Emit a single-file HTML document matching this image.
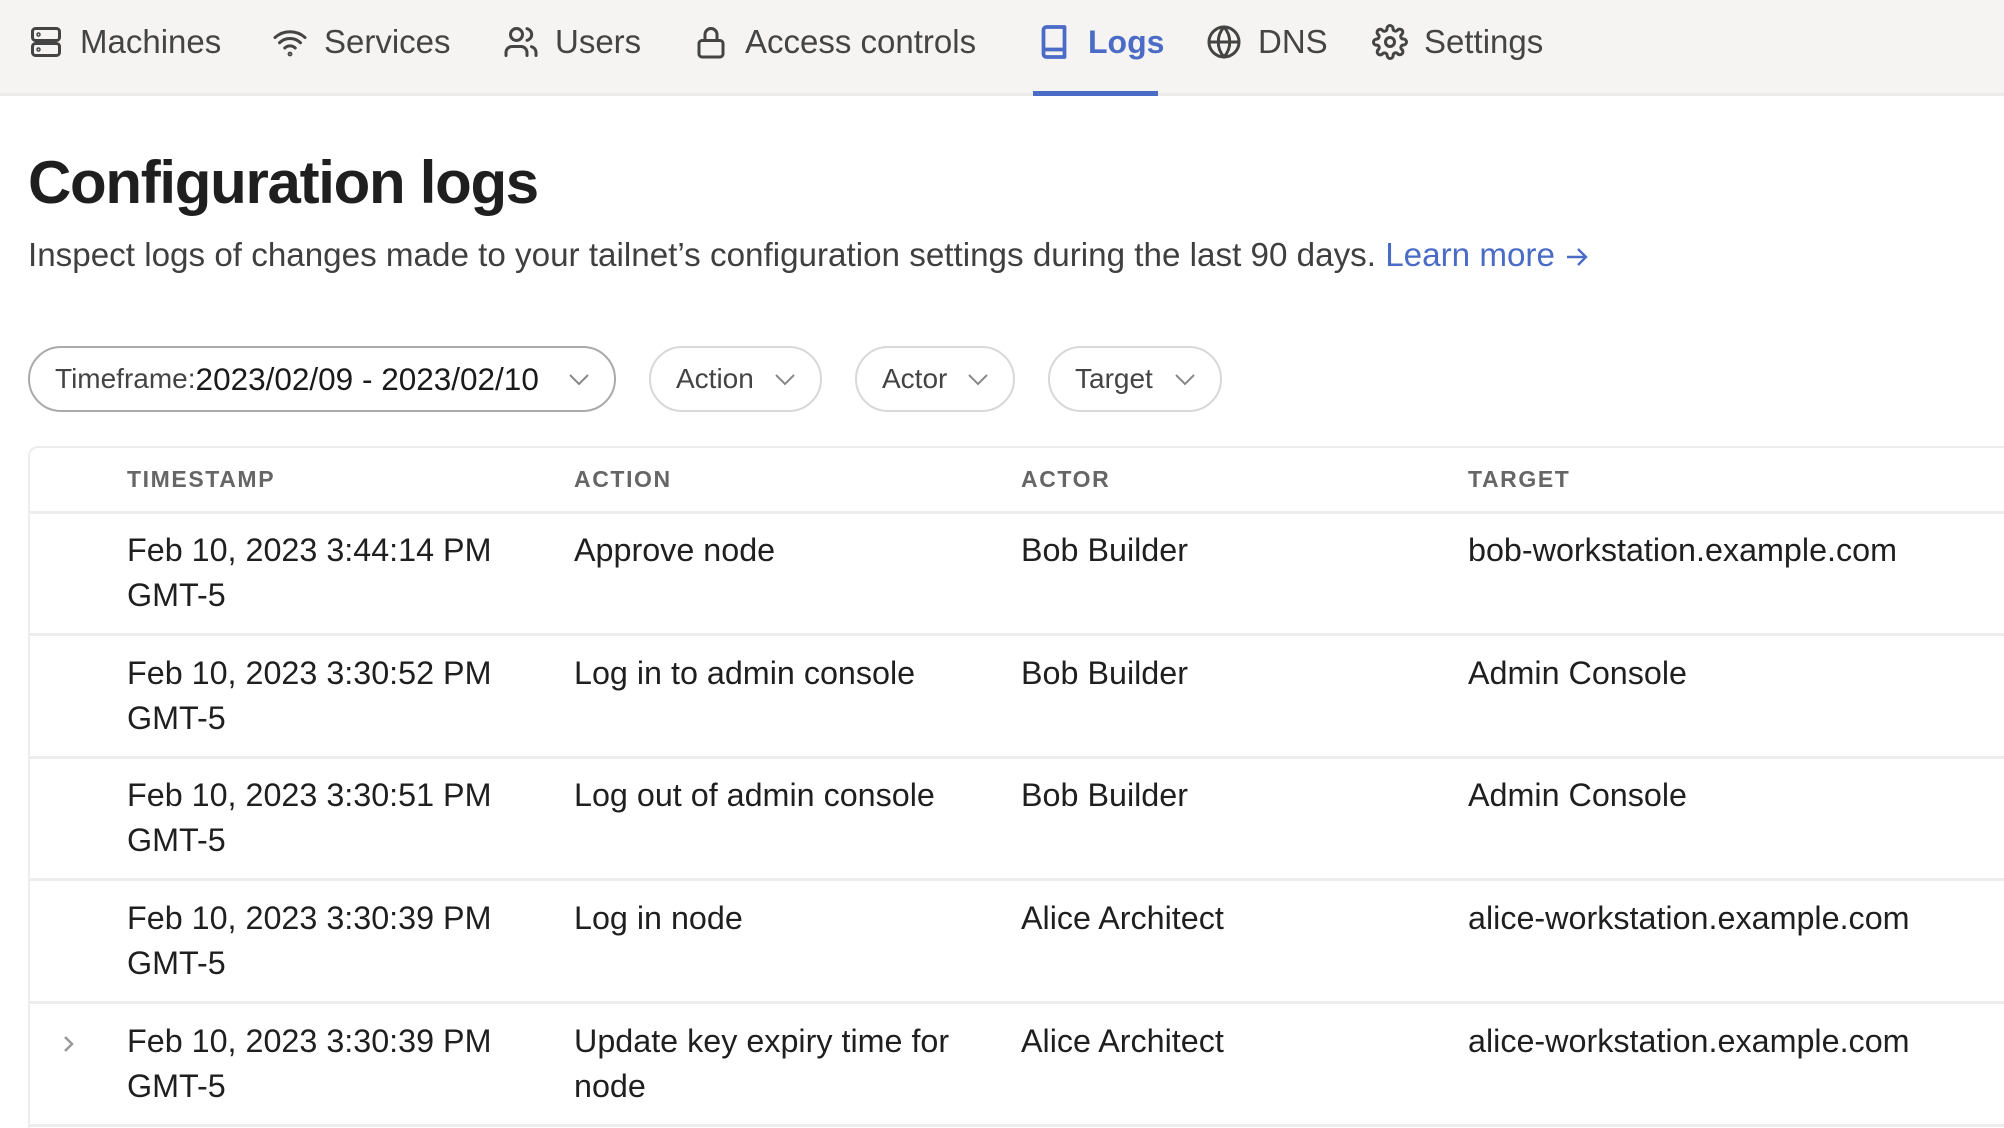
<!DOCTYPE html>
<html style="height:1128px;overflow:hidden"><head><meta charset="utf-8"><style>
*{margin:0;padding:0;box-sizing:border-box}
body{width:2004px;height:1128px;overflow:hidden;background:#fff;font-family:"Liberation Sans",sans-serif;color:#1f1f1f;position:relative}
.nav{position:absolute;left:0;top:0;width:2004px;height:96px;background:#f5f4f2;border-bottom:3px solid #ebebea}
.ni{position:absolute;top:20px;height:44px;display:flex;align-items:center;font-size:33px;color:#444}
.ni svg{width:36px;height:36px;margin-right:16px;fill:none;stroke:#444;stroke-width:2;stroke-linecap:round;stroke-linejoin:round}
.ni.act{color:#4a6bc6;font-weight:bold;font-size:32px}
.ni.act svg{stroke:#4a6bc6}
.ul{position:absolute;left:1033px;top:91px;width:125px;height:5px;background:#4a6bc6}
h1{position:absolute;left:28px;top:148px;font-size:60px;font-weight:bold;letter-spacing:-1.3px;color:#1f1f1f}
.sub{position:absolute;left:28px;top:237px;font-size:33.2px;color:#3f3f3f;white-space:nowrap}
.sub a{color:#4a6bc6;text-decoration:none}
.f{position:absolute;top:346px;height:66px;border:2px solid #d8d8d8;border-radius:33px;font-size:28px;color:#444;display:flex;align-items:center;padding-left:25px}
.f svg{position:absolute;right:24px;top:23px;width:22px;height:16px;fill:none;stroke:#888;stroke-width:2}
.f b{font-weight:normal;color:#1a1a1a;font-size:31.5px}
.tbl{position:absolute;left:28px;top:446px;width:2000px;height:720px;border:2px solid #ededed;border-radius:10px;border-right:none}
.th{position:absolute;top:466px;font-size:23px;font-weight:bold;letter-spacing:1.6px;color:#666}
.hl{position:absolute;left:30px;width:1974px;height:3px;background:#ededed}
.c{position:absolute;font-size:32.3px;line-height:45px;color:#1f1f1f;white-space:nowrap}
</style></head><body>
<div class="nav">
<div class="ni" style="left:28px"><svg viewBox="0 0 24 24"><rect x="3" y="3" width="18" height="8" rx="2"/><rect x="3" y="13" width="18" height="8" rx="2"/><circle cx="7" cy="7" r=".5"/><circle cx="7" cy="17" r=".5"/></svg>Machines</div>
<div class="ni" style="left:272px"><svg viewBox="0 0 24 24"><path d="M2 9a15 15 0 0 1 20 0M5 12.5a10 10 0 0 1 14 0M8.5 16a5 5 0 0 1 7 0"/><circle cx="12" cy="20" r=".6"/></svg>Services</div>
<div class="ni" style="left:503px"><svg viewBox="0 0 24 24"><circle cx="9" cy="7" r="4"/><path d="M2 21v-2a4 4 0 0 1 4-4h6a4 4 0 0 1 4 4v2M16 3.1a4 4 0 0 1 0 7.8M22 21v-2a4 4 0 0 0-3-3.9"/></svg>Users</div>
<div class="ni" style="left:693px"><svg viewBox="0 0 24 24"><rect x="4" y="11" width="16" height="11" rx="2"/><path d="M8 11V7a4 4 0 0 1 8 0v4"/></svg>Access controls</div>
<div class="ni act" style="left:1036px"><svg viewBox="0 0 24 24" style="stroke-width:2.5"><path d="M5 4a2 2 0 0 1 2-2h12v20H7a2 2 0 0 1-2-2zM5 17h14"/></svg>Logs</div>
<div class="ni" style="left:1206px"><svg viewBox="0 0 24 24"><circle cx="12" cy="12" r="10"/><path d="M2 12h20M12 2a15 15 0 0 1 0 20a15 15 0 0 1 0-20"/></svg>DNS</div>
<div class="ni" style="left:1372px"><svg viewBox="0 0 24 24"><circle cx="12" cy="12" r="3"/><path d="M19.4 15a1.7 1.7 0 0 0 .3 1.8l.1.1a2 2 0 1 1-2.8 2.8l-.1-.1a1.7 1.7 0 0 0-1.8-.3 1.7 1.7 0 0 0-1 1.5V21a2 2 0 1 1-4 0v-.1a1.7 1.7 0 0 0-1.1-1.5 1.7 1.7 0 0 0-1.8.3l-.1.1a2 2 0 1 1-2.8-2.8l.1-.1a1.7 1.7 0 0 0 .3-1.8 1.7 1.7 0 0 0-1.5-1H3a2 2 0 1 1 0-4h.1a1.7 1.7 0 0 0 1.5-1.1 1.7 1.7 0 0 0-.3-1.8l-.1-.1a2 2 0 1 1 2.8-2.8l.1.1a1.7 1.7 0 0 0 1.8.3H9a1.7 1.7 0 0 0 1-1.5V3a2 2 0 1 1 4 0v.1a1.7 1.7 0 0 0 1 1.5 1.7 1.7 0 0 0 1.8-.3l.1-.1a2 2 0 1 1 2.8 2.8l-.1.1a1.7 1.7 0 0 0-.3 1.8V9a1.7 1.7 0 0 0 1.5 1H21a2 2 0 1 1 0 4h-.1a1.7 1.7 0 0 0-1.5 1z"/></svg>Settings</div>
<div class="ul"></div>
</div>
<h1>Configuration logs</h1>
<div class="sub">Inspect logs of changes made to your tailnet’s configuration settings during the last 90 days. <a>Learn more <svg width="26" height="22" viewBox="0 0 26 22" style="vertical-align:-2px"><path d="M3 11h19M14 3l8 8-8 8" fill="none" stroke="#4a6bc6" stroke-width="2.4"/></svg></a></div>
<div class="f" style="left:28px;width:588px;border-color:#aaa">Timeframe:<b>2023/02/09 - 2023/02/10</b><svg viewBox="0 0 22 16"><path d="M2 4l9 9 9-9"/></svg></div>
<div class="f" style="left:649px;width:173px">Action<svg viewBox="0 0 22 16"><path d="M2 4l9 9 9-9"/></svg></div>
<div class="f" style="left:855px;width:160px">Actor<svg viewBox="0 0 22 16"><path d="M2 4l9 9 9-9"/></svg></div>
<div class="f" style="left:1048px;width:174px">Target<svg viewBox="0 0 22 16"><path d="M2 4l9 9 9-9"/></svg></div>
<div class="tbl"></div>
<div class="th" style="left:127px">TIMESTAMP</div>
<div class="th" style="left:574px">ACTION</div>
<div class="th" style="left:1021px">ACTOR</div>
<div class="th" style="left:1468px">TARGET</div>
<div class="hl" style="top:511px"></div>
<div class="hl" style="top:633px"></div>
<div class="hl" style="top:756px"></div>
<div class="hl" style="top:878px"></div>
<div class="hl" style="top:1001px"></div>
<div class="hl" style="top:1124px"></div>

<div class="c" style="left:127px;top:528px">Feb 10, 2023 3:44:14 PM<br>GMT-5</div>
<div class="c" style="left:574px;top:528px">Approve node</div>
<div class="c" style="left:1021px;top:528px">Bob Builder</div>
<div class="c" style="left:1468px;top:528px">bob-workstation.example.com</div>

<div class="c" style="left:127px;top:651px">Feb 10, 2023 3:30:52 PM<br>GMT-5</div>
<div class="c" style="left:574px;top:651px">Log in to admin console</div>
<div class="c" style="left:1021px;top:651px">Bob Builder</div>
<div class="c" style="left:1468px;top:651px">Admin Console</div>

<div class="c" style="left:127px;top:773px">Feb 10, 2023 3:30:51 PM<br>GMT-5</div>
<div class="c" style="left:574px;top:773px">Log out of admin console</div>
<div class="c" style="left:1021px;top:773px">Bob Builder</div>
<div class="c" style="left:1468px;top:773px">Admin Console</div>

<div class="c" style="left:127px;top:896px">Feb 10, 2023 3:30:39 PM<br>GMT-5</div>
<div class="c" style="left:574px;top:896px">Log in node</div>
<div class="c" style="left:1021px;top:896px">Alice Architect</div>
<div class="c" style="left:1468px;top:896px">alice-workstation.example.com</div>

<svg style="position:absolute;left:62px;top:1034px" width="14" height="20" viewBox="0 0 14 20"><path d="M3 3l7 7-7 7" fill="none" stroke="#999" stroke-width="2.5"/></svg>
<div class="c" style="left:127px;top:1019px">Feb 10, 2023 3:30:39 PM<br>GMT-5</div>
<div class="c" style="left:574px;top:1019px">Update key expiry time for<br>node</div>
<div class="c" style="left:1021px;top:1019px">Alice Architect</div>
<div class="c" style="left:1468px;top:1019px">alice-workstation.example.com</div>
</body></html>
